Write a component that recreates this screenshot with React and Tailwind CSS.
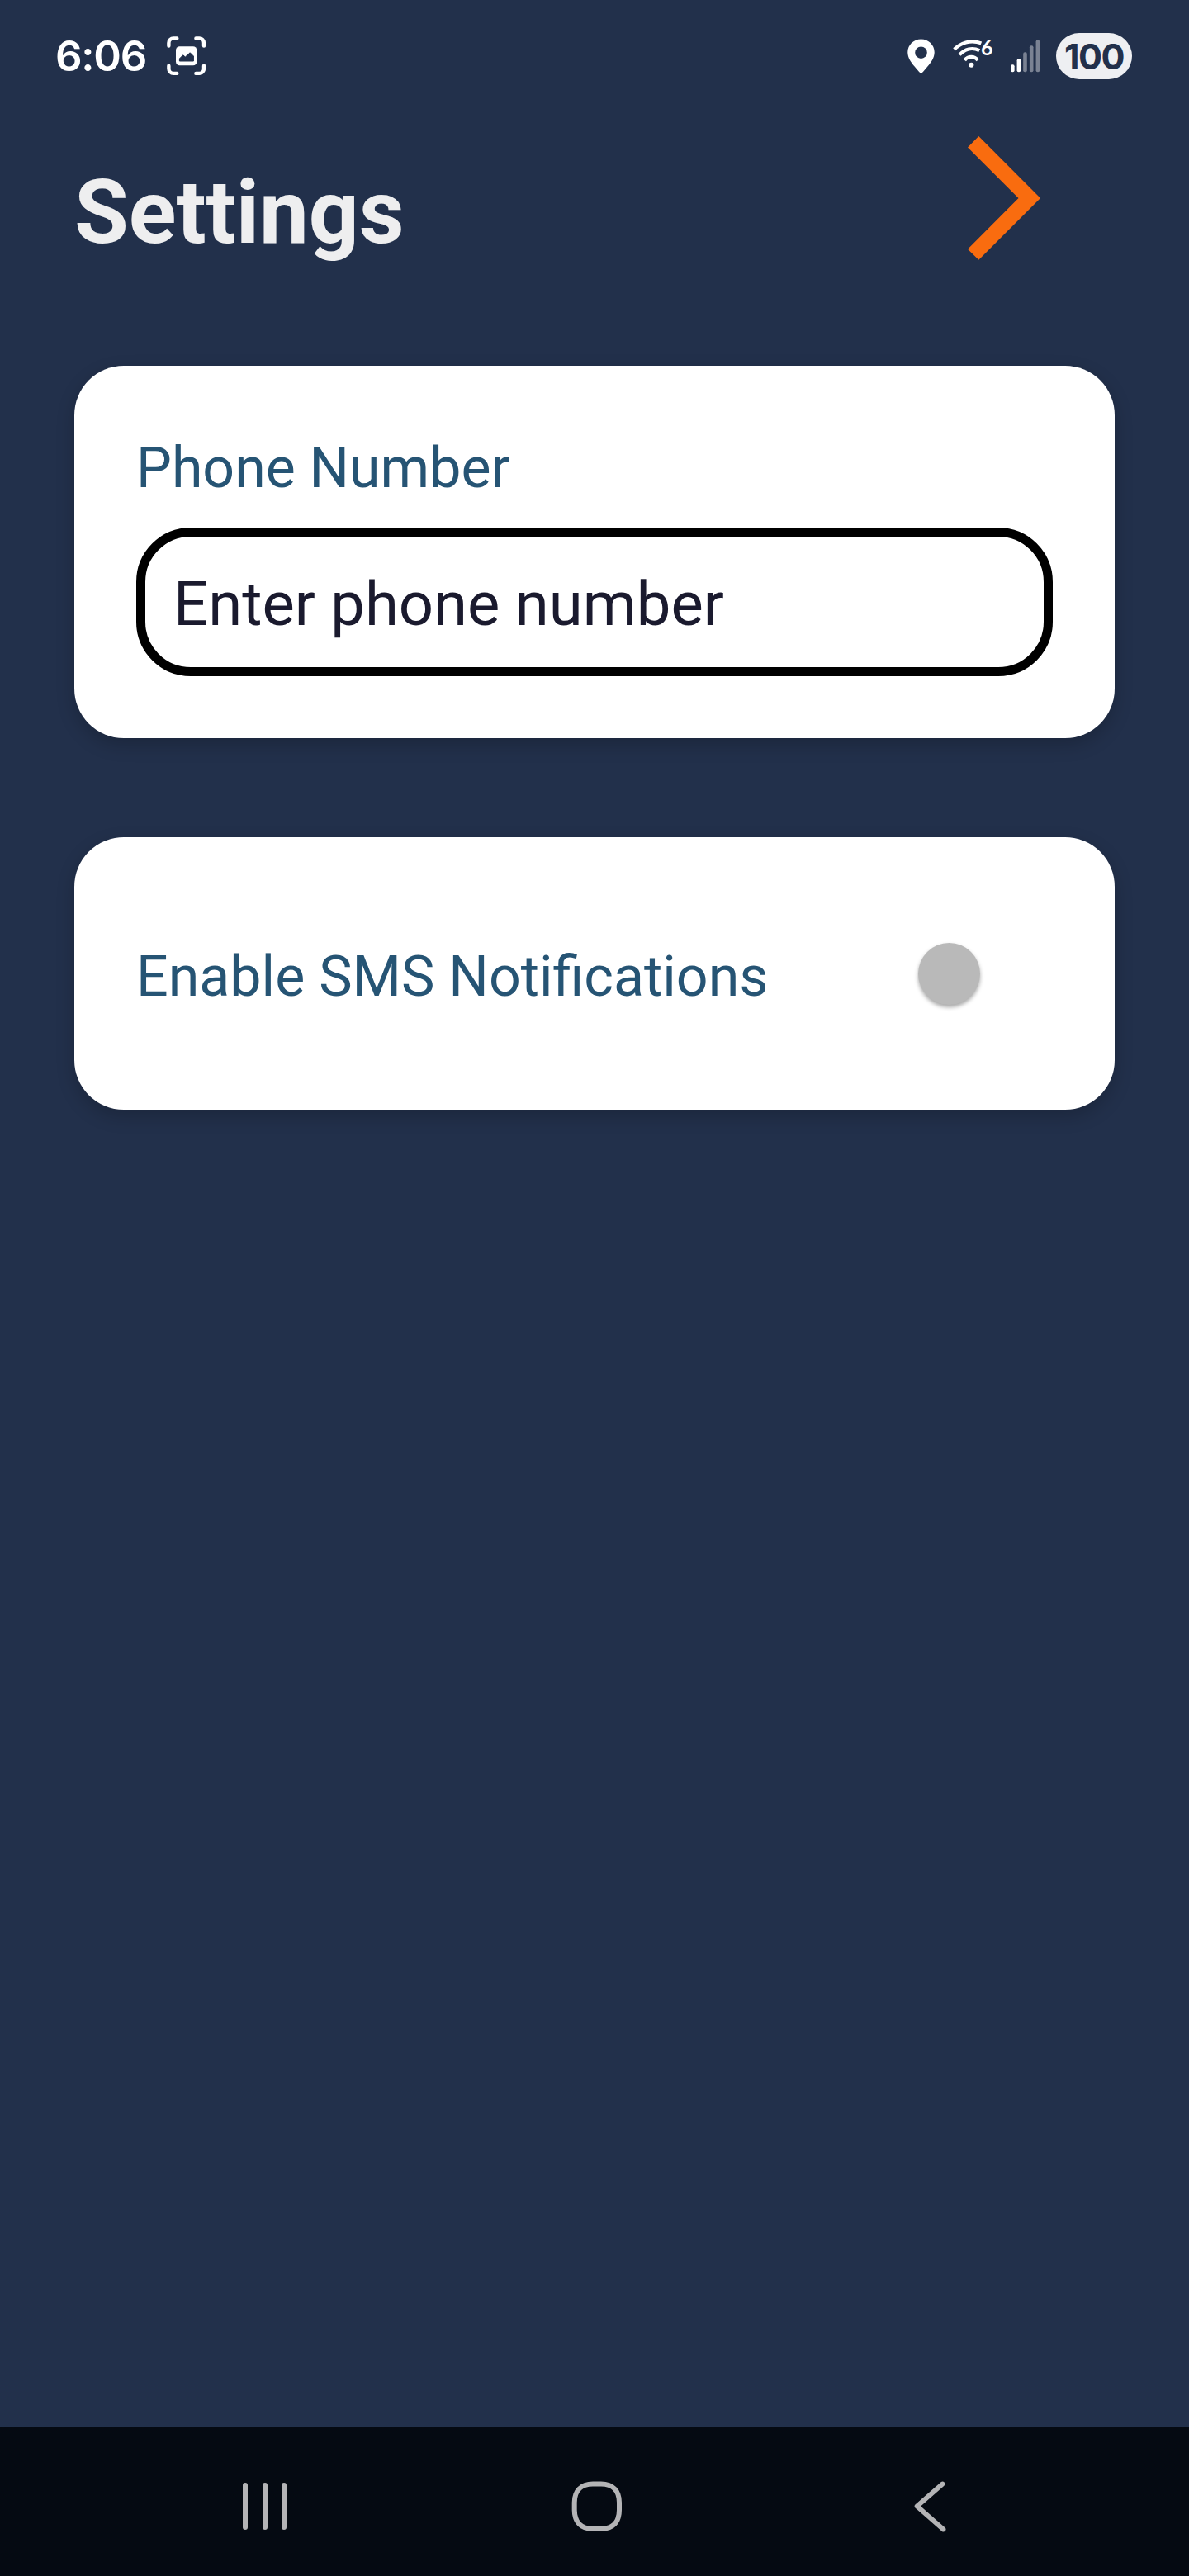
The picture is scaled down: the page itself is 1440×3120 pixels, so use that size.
function ScreenshotIcon() {
  return (
    <svg width="48" height="48" viewBox="0 0 48 48" fill="none" className="shrink-0">
      <g stroke="#fff" strokeWidth="4.4" strokeLinecap="round" strokeLinejoin="round">
        <path d="M2.4 11.5V8a5.6 5.6 0 0 1 5.6-5.6h4.3" />
        <path d="M35.4 2.4H39.4A5.6 5.6 0 0 1 45 8v3.5" />
        <path d="M45 35.7v3.6a5.6 5.6 0 0 1-5.6 5.6h-4" />
        <path d="M12.3 44.9H8a5.6 5.6 0 0 1-5.6-5.6v-3.6" />
      </g>
      <rect x="11" y="12.3" width="25.4" height="23" rx="4.5" fill="#fff" />
      <path
        d="M15.4 30v-3l4.2-4.2 2.8 2.2 5.8-5.2 4.2 4.200v6z"
        fill="#22304b"
        stroke="#22304b"
        strokeWidth="1"
        strokeLinejoin="round"
      />
    </svg>
  );
}

function PinIcon() {
  return (
    <svg width="33" height="42" viewBox="0 0 33 42" className="shrink-0">
      <path
        fillRule="evenodd"
        fill="#fff"
        d="M16.5 0.5C25.6 0.5 32.7 7.5 32.7 16.3c0 7.200-4.200 12.300-8.300 17.300l-5.700 6.700c-1.200 1.500-3.200 1.500-4.400 0l-5.700-6.700C4.500 28.600.3 23.500.3 16.300.3 7.500 7.400.5 16.500.5zM16.500 9.400a7.300 7.300 0 1 0 0 14.600 7.300 7.300 0 0 0 0-14.600z"
      />
    </svg>
  );
}

function WifiIcon() {
  return (
    <div className="relative h-[42px] w-[50px] shrink-0">
      <svg width="50" height="42" viewBox="0 0 50 42" fill="none">
        <g stroke="#fff" strokeWidth="4.2">
          <path d="M1.700 12.800C8.800 5.500 21 0.300 34.400 5.400" />
          <path d="M8 19.400C14.500 12.300 23.500 9.800 32.200 14.200" />
          <path d="M14.300 25.900C18.500 20.400 26 20.400 30.200 25.900" />
        </g>
        <circle cx="22.400" cy="31.800" r="3" fill="#fff" />
      </svg>
      <span className="absolute top-[-4px] left-[34px] font-[Lato] text-[25px] leading-[28px] font-bold text-white">
        6
      </span>
    </div>
  );
}

function SignalIcon() {
  return (
    <svg width="36" height="40" viewBox="0 0 36 40" fill="#fff" className="shrink-0">
      <rect x="0" y="30.300" width="4.600" height="9" rx="2" />
      <rect x="7.600" y="23.300" width="4.600" height="16" rx="2" />
      <rect x="15.200" y="15.300" width="4.600" height="24" rx="2" opacity=".4" />
      <rect x="22.900" y="7.300" width="4.600" height="32" rx="2" opacity=".4" />
      <rect x="30.600" y="0.500" width="4.600" height="38.800" rx="2" opacity=".4" />
    </svg>
  );
}

function StatusBar() {
  return (
    <div className="flex h-[136px] items-center pr-[69px] pl-[67px]">
      <span className="w-[135px] pb-[2px] font-[Inter] text-[51px] leading-none font-semibold tracking-[-1.3px] text-white">
        6:06
      </span>
      <ScreenshotIcon />
      <div className="ml-auto flex items-center">
        <PinIcon />
        <div className="ml-[22px]">
          <WifiIcon />
        </div>
        <div className="ml-[20px]">
          <SignalIcon />
        </div>
        <div className="ml-[19px] flex h-[56px] w-[92px] items-center justify-center rounded-full bg-[#eeeff2] font-[Inter] text-[43px] leading-none font-bold tracking-[-1.5px] text-[#22304b]">
          100
        </div>
      </div>
    </div>
  );
}

function NavBar() {
  return (
    <nav className="flex h-[180px] items-center justify-between bg-[#050a12] pt-[11px] pr-[293px] pl-[294px]">
      <div className="flex gap-[17.600px]">
        <span className="h-[57px] w-[6px] rounded-full bg-[#b4b4b6]" />
        <span className="h-[57px] w-[6px] rounded-full bg-[#b4b4b6]" />
        <span className="h-[57px] w-[6px] rounded-full bg-[#b4b4b6]" />
      </div>
      <svg width="62" height="62" viewBox="0 0 62 62" fill="none" className="mr-[9px]">
        <path
          d="M26 3.500H36C50 3.500 58 11.500 58 26V35C58 50 50 57.800 36 57.800H26C12 57.800 3.700 50 3.700 35V26C3.700 11.500 12 3.500 26 3.500Z"
          stroke="#b4b4b6"
          strokeWidth="6"
        />
      </svg>
      <svg width="40" height="64" viewBox="0 0 40 64" fill="none">
        <path
          d="M34.500 4.500L3.600 31.500L35.500 59.500"
          stroke="#b4b4b6"
          strokeWidth="5.800"
          strokeLinecap="round"
          strokeLinejoin="round"
        />
      </svg>
    </nav>
  );
}

export default function App() {
  return (
    <div className="flex h-[3120px] w-[1440px] flex-col bg-[#22304b] font-[Roboto]">
      <StatusBar />
      <header className="flex h-[307px] justify-between pr-[179px] pl-[90px]">
        <h1 className="mt-[60px] text-[106.800px] leading-[123px] font-bold text-[#eeeeef]">Settings</h1>
        <svg width="89" height="151" viewBox="0 0 89 151" className="mt-[29px]">
          <path d="M13.300 0L88 75L13.300 149.700L0 136.700L61.500 75L0 13.500Z" fill="#f96c0f" />
        </svg>
      </header>
      <main className="flex flex-1 flex-col gap-[120px] px-[90px]">
        <section className="h-[451px] rounded-[60px] bg-white px-[75px] pt-[84px] shadow-[0_8px_22px_rgba(0,0,0,0.2)]">
          <label className="block text-[68px] leading-[80px] text-[#265474]">Phone Number</label>
          <div className="mt-[32px] flex h-[180px] items-center rounded-[66px] border-[11px] border-black px-[34px] pt-[7px] text-[74.200px] leading-none text-[#1a1a2e]">
            Enter phone number
          </div>
        </section>
        <section className="flex h-[330px] items-center justify-between rounded-[60px] bg-white pr-[163px] pl-[75px] shadow-[0_8px_22px_rgba(0,0,0,0.2)]">
          <span className="pt-[7px] text-[68.100px] leading-[80px] text-[#265474]">Enable SMS Notifications</span>
          <span className="size-[75px] rounded-full bg-[#b9b9b9] shadow-[0_3px_5px_rgba(0,0,0,0.35)]" />
        </section>
      </main>
      <NavBar />
    </div>
  );
}
